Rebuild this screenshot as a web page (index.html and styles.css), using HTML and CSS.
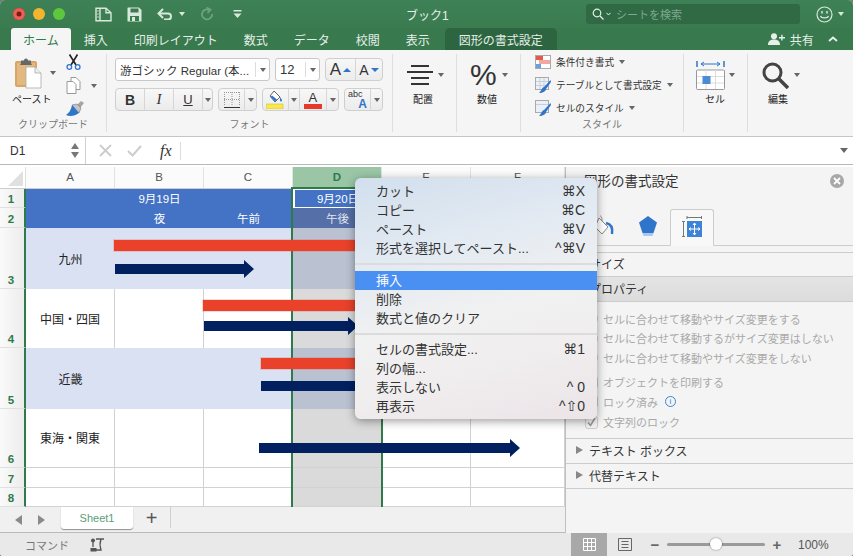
FILE: index.html
```html
<!DOCTYPE html>
<html lang="ja">
<head>
    <meta charset="UTF-8">
    <title>ブック1</title>
    <link rel="stylesheet" href="styles.css">
</head>
<body>
<div class="window">
    <header class="titlebar">
        <div class="lights"><span class="light red"></span><span class="light yellow"></span><span class="light green"></span></div>
        <div class="quick-tools">
            <svg class="qt-side" width="17" height="15" viewBox="0 0 17 15" fill="none" stroke="#d9e8dd" stroke-width="1.4"><path d="M1 1.2h10l5 4.5v8.1H1z"/><path d="M5 1.2v12.6M11 1.2v4.5h5"/><path d="M2.5 4h1M2.5 7h1M2.5 10h1"/></svg>
            <svg class="qt-save" width="15" height="15" viewBox="0 0 15 15"><path d="M1 0.5h11l2.5 2.5v11.500H0.500V1z" fill="#d9e8dd"/><rect x="3.500" y="1.500" width="8" height="4" fill="#3a7b50"/><rect x="3" y="9" width="9" height="5" fill="#3a7b50"/><rect x="5" y="10" width="3" height="4" fill="#d9e8dd"/></svg>
            <svg class="qt-undo" width="17" height="12" viewBox="0 0 17 12" fill="none" stroke="#d9e8dd" stroke-width="2"><path d="M2 5.500h9a3 3 0 0 1 0 6H7"/><path d="M6 1L1.500 5.500 6 10"/></svg>
            <span class="caret light-caret"></span>
            <svg class="qt-redo" width="13" height="14" viewBox="0 0 13 14" fill="none" stroke="#6fa283" stroke-width="1.800"><path d="M8 2.800A5 5 0 1 0 11 7"/><path d="M5.500 0.500L9.500 2.800 6.500 6"/></svg>
            <svg class="qt-more" width="9" height="9" viewBox="0 0 9 9"><path d="M0.500 0h8v1.500h-8z M0.500 3.500h8L4.500 8z" fill="#d9e8dd"/></svg>
        </div>
        <div class="doc-title">ブック1</div>
        <div class="search-box">
            <svg width="12" height="12" viewBox="0 0 12 12" fill="none" stroke="#e6efe9" stroke-width="1.200"><circle cx="5" cy="5" r="3.800"/><path d="M8 8l3.500 3.500"/></svg>
            <svg class="search-chev" width="5" height="4" viewBox="0 0 5 4" fill="none" stroke="#e6efe9"><path d="M0.500 0.800L2.500 3 4.500 0.800"/></svg>
            <span>シートを検索</span>
        </div>
        <svg class="smiley" width="17" height="17" viewBox="0 0 17 17" fill="none" stroke="#d9e8dd" stroke-width="1.200"><circle cx="8.500" cy="8.500" r="7.500"/><path d="M4.500 10c1 2.500 7 2.500 8 0"/><path d="M6 5v2.500M11 5v2.500" stroke-width="1.500"/></svg>
        <span class="caret light-caret"></span>
    </header>

    <nav class="tabs">
        <div class="tab active">ホーム</div>
        <div class="tab">挿入</div>
        <div class="tab">印刷レイアウト</div>
        <div class="tab">数式</div>
        <div class="tab">データ</div>
        <div class="tab">校閲</div>
        <div class="tab">表示</div>
        <div class="tab context">図形の書式設定</div>
        <div class="share">
            <svg width="17" height="12" viewBox="0 0 17 12" fill="#e6efe9"><circle cx="6" cy="3.200" r="3"/><path d="M0 12c0-4 2.500-5.500 6-5.500s6 1.500 6 5.500z"/><path d="M11 4h2.200V1.800h1.400V4H17v1.400h-2.400v2.200h-1.400V5.400H11z"/></svg>
            <span>共有</span>
            <svg class="collapse" width="10" height="6" viewBox="0 0 10 6" fill="none" stroke="#e6efe9" stroke-width="2"><path d="M1 5l4-3.500L9 5"/></svg>
        </div>
    </nav>

    <section class="ribbon">
        <div class="group clipboard">
            <div class="group-body">
                <div class="paste">
                    <div class="paste-top">
                        <svg width="28" height="32" viewBox="0 0 28 32"><rect x="1" y="4" width="22" height="26" rx="2" fill="#d7a566"/><rect x="3" y="6" width="18" height="22" fill="#e3b97f"/><path d="M7 6V3.500h3a2 2 0 0 1 4 0h3V6l1 2H6z" fill="#676767"/><path d="M12 10h9l6 6v15H12z" fill="#fff" stroke="#aaa" stroke-width="0.800"/><path d="M21 10v6h6" fill="#eee" stroke="#aaa" stroke-width="0.800"/></svg>
                        <span class="caret"></span>
                    </div>
                    <div class="tool-label">ペースト</div>
                </div>
                <div class="clip-small">
                    <svg width="15" height="16" viewBox="0 0 15 16" fill="none"><path d="M3.500 0.500L10 11M11.500 0.500L5 11" stroke="#222" stroke-width="1.600"/><circle cx="3.300" cy="13" r="2.300" stroke="#2f75c9" stroke-width="1.300"/><circle cx="11.700" cy="13" r="2.300" stroke="#2f75c9" stroke-width="1.300"/></svg>
                    <div class="copy-row">
                        <svg width="15" height="17" viewBox="0 0 15 17" fill="#fff" stroke="#999"><path d="M5 0.500h5l4 4v8H5z"/><path d="M1 4.500h6l3 3v9H1z"/></svg>
                        <span class="caret"></span>
                    </div>
                    <svg width="18" height="16" viewBox="0 0 18 16"><path d="M11 4l4-4 3 2-4 5z" fill="#a5a5a5"/><path d="M6 4l5-1 4 4-2 5z" fill="#c4c4c4" stroke="#777" stroke-width="0.600"/><path d="M6 4l7 8c-4 3-9 4-13 2 3-2 5-5 6-10z" fill="#2f75c9"/></svg>
                </div>
            </div>
            <div class="group-label">クリップボード</div>
        </div>

        <div class="group font">
            <div class="group-body font-rows">
                <div class="font-row">
                    <div class="box font-name"><span class="box-text">游ゴシック Regular (本...</span><span class="box-drop"><span class="caret"></span></span></div>
                    <div class="box font-size"><span class="box-text">12</span><span class="box-drop"><span class="caret"></span></span></div>
                    <div class="btn-set size-set">
                        <div class="btn"><span class="big-a">A</span><span class="tri-up"></span></div>
                        <div class="btn"><span class="small-a">A</span><span class="tri-down"></span></div>
                    </div>
                </div>
                <div class="font-row">
                    <div class="btn-set biu">
                        <div class="btn"><b>B</b></div>
                        <div class="btn"><i class="italic">I</i></div>
                        <div class="btn"><span class="under">U</span></div>
                        <div class="btn drop"><span class="caret"></span></div>
                    </div>
                    <div class="btn-set borders">
                        <div class="btn">
                            <svg width="18" height="18" viewBox="0 0 18 18" fill="none"><path d="M1 1.500h16M1 8.500h16M1.500 1v13M9 1v13M16.500 1v13" stroke="#999" stroke-dasharray="1 1"/><path d="M1 16.500h16" stroke="#333"/></svg>
                        </div>
                        <div class="btn drop"><span class="caret"></span></div>
                    </div>
                    <div class="btn-set colors">
                        <div class="btn fill-btn">
                            <svg width="18" height="19" viewBox="0 0 18 19"><path d="M8 1l6 6-5 5-5-6z" fill="#fff" stroke="#666"/><path d="M4.500 7l4.500 4.500 2-2-5-4z" fill="#2f75c9"/><path d="M14 7c1 1.500 2 2.500 2 3.500a1 1 0 0 1-2 0z" fill="#2f75c9"/><rect x="0" y="14" width="17" height="5" fill="#f8e84a" stroke="#c4b93a" stroke-width="0.500"/></svg>
                        </div>
                        <div class="btn drop"><span class="caret"></span></div>
                        <div class="btn color-a"><span class="a-letter">A</span><span class="a-swatch"></span></div>
                        <div class="btn drop"><span class="caret"></span></div>
                    </div>
                    <div class="btn-set phonetic">
                        <div class="btn abc"><span class="abc-text">abc</span><span class="abc-a">A</span></div>
                        <div class="btn drop"><span class="caret"></span></div>
                    </div>
                </div>
            </div>
            <div class="group-label">フォント</div>
        </div>

        <div class="group align">
            <div class="big-tool">
                <div class="big-top">
                    <svg width="26" height="22" viewBox="0 0 26 22" fill="#333"><rect x="4" y="1" width="18" height="2"/><rect x="0" y="7" width="26" height="2"/><rect x="4" y="13" width="18" height="2"/><rect x="4" y="19" width="18" height="2"/></svg>
                    <span class="caret"></span>
                </div>
                <div class="tool-label">配置</div>
            </div>
        </div>

        <div class="group number">
            <div class="big-tool">
                <div class="big-top"><span class="percent">%</span><span class="caret"></span></div>
                <div class="tool-label">数値</div>
            </div>
        </div>

        <div class="group styles">
            <div class="group-body style-list">
                <div class="style-row">
                    <svg width="16" height="14" viewBox="0 0 16 14"><rect x="0.500" y="0.500" width="15" height="13" fill="#fff" stroke="#aaa"/><rect x="1" y="1" width="7" height="4" fill="#e65a4a"/><rect x="4" y="5" width="11" height="4" fill="#f2a7a0"/><rect x="1" y="9" width="5" height="4" fill="#6aa0dd"/></svg>
                    <span>条件付き書式</span><span class="caret"></span>
                </div>
                <div class="style-row">
                    <svg width="16" height="17" viewBox="0 0 16 17"><rect x="0.500" y="0.500" width="13" height="12" fill="#eef2f7" stroke="#aaa"/><path d="M1 4.500h12M1 8.500h12M5 1v11M9 1v11" stroke="#c6cfdb"/><path d="M15.500 3L10 9l-1 1c-2 .5-2 3-5 6 4 0 7-2 7-4l5-7z" fill="#2f75c9"/></svg>
                    <span>テーブルとして書式設定</span><span class="caret"></span>
                </div>
                <div class="style-row">
                    <svg width="16" height="17" viewBox="0 0 16 17"><rect x="0.500" y="0.500" width="13" height="12" fill="#e9f0f8" stroke="#aaa"/><path d="M1 4.500h12" stroke="#c6cfdb"/><path d="M15.500 3L10 9l-1 1c-2 .5-2 3-5 6 4 0 7-2 7-4l5-7z" fill="#2f75c9"/></svg>
                    <span>セルのスタイル</span><span class="caret"></span>
                </div>
            </div>
            <div class="group-label">スタイル</div>
        </div>

        <div class="group cells">
            <div class="big-tool">
                <div class="big-top">
                    <svg width="29" height="29" viewBox="0 0 29 29" fill="none"><path d="M1 0v6M28 0v6" stroke="#2f75c9" stroke-width="1.500"/><path d="M5 3h19M8 1L5 3l3 2M21 1l3 2-3 2" stroke="#2f75c9"/><rect x="0.500" y="9" width="28" height="19.500" rx="1" fill="#fff" stroke="#999"/><path d="M1 15.500h27M1 22h27M10 9v19M19.500 9v19" stroke="#ddd"/><rect x="6.500" y="15" width="8" height="8" fill="#4a8bd4"/></svg>
                    <span class="caret"></span>
                </div>
                <div class="tool-label">セル</div>
            </div>
        </div>

        <div class="group edit">
            <div class="big-tool">
                <div class="big-top">
                    <svg width="27" height="27" viewBox="0 0 27 27" fill="none" stroke="#444"><circle cx="10.500" cy="10.500" r="8.500" stroke-width="3"/><path d="M17 17l9 9" stroke-width="3.500"/></svg>
                    <span class="caret"></span>
                </div>
                <div class="tool-label">編集</div>
            </div>
        </div>
    </section>

    <section class="formula-bar">
        <div class="name-box">
            <span>D1</span>
            <span class="spinner"><span class="tri-up gray"></span><span class="tri-down gray"></span></span>
        </div>
        <div class="formula-tools">
            <svg width="13" height="13" viewBox="0 0 13 13" stroke="#ccc" stroke-width="1.800"><path d="M1 1l11 11M12 1L1 12"/></svg>
            <svg width="15" height="12" viewBox="0 0 15 12" fill="none" stroke="#ccc" stroke-width="2"><path d="M1 6l4.500 4.500L14 1"/></svg>
            <span class="fx">fx</span>
        </div>
        <div class="formula-input"></div>
        <span class="caret formula-caret"></span>
    </section>

    <div class="main">
        <section class="sheet">
            <div class="grid-row col-heads">
                <div class="corner"><span class="corner-tri"></span></div>
                <div class="col-head">A</div>
                <div class="col-head">B</div>
                <div class="col-head">C</div>
                <div class="col-head selected">D</div>
                <div class="col-head">E</div>
                <div class="col-head">F</div>
            </div>
            <div class="grid-row row-1">
                <div class="row-head">1</div>
                <div class="cell blue"></div><div class="cell blue">9月19日</div><div class="cell blue"></div>
                <div class="cell blue active-cell">9月20日</div><div class="cell blue"></div><div class="cell blue"></div>
            </div>
            <div class="grid-row row-2">
                <div class="row-head">2</div>
                <div class="cell blue"></div><div class="cell blue">夜</div><div class="cell blue">午前</div>
                <div class="cell blue-sel">午後</div><div class="cell blue"></div><div class="cell blue"></div>
            </div>
            <div class="grid-row row-3">
                <div class="row-head">3</div>
                <div class="cell band">九州</div><div class="cell band"></div><div class="cell band"></div>
                <div class="cell band-sel"></div><div class="cell band"></div><div class="cell band"></div>
            </div>
            <div class="grid-row row-4">
                <div class="row-head">4</div>
                <div class="cell plain">中国・四国</div><div class="cell plain"></div><div class="cell plain"></div>
                <div class="cell sel"></div><div class="cell plain"></div><div class="cell plain"></div>
            </div>
            <div class="grid-row row-3">
                <div class="row-head">5</div>
                <div class="cell band">近畿</div><div class="cell band"></div><div class="cell band"></div>
                <div class="cell band-sel"></div><div class="cell band"></div><div class="cell band"></div>
            </div>
            <div class="grid-row row-4">
                <div class="row-head">6</div>
                <div class="cell plain lined">東海・関東</div><div class="cell plain lined"></div><div class="cell plain lined"></div>
                <div class="cell sel lined"></div><div class="cell plain lined"></div><div class="cell plain lined"></div>
            </div>
            <div class="grid-row row-2">
                <div class="row-head">7</div>
                <div class="cell plain lined"></div><div class="cell plain lined"></div><div class="cell plain lined"></div>
                <div class="cell sel lined"></div><div class="cell plain lined"></div><div class="cell plain lined"></div>
            </div>
            <div class="grid-row row-1">
                <div class="row-head">8</div>
                <div class="cell plain lined"></div><div class="cell plain lined"></div><div class="cell plain lined"></div>
                <div class="cell sel lined"></div><div class="cell plain lined"></div><div class="cell plain lined"></div>
            </div>

            <div class="col-outline"></div>
            <div class="shape bar bar-1"></div>
            <div class="shape arrow arrow-1"></div>
            <div class="shape bar bar-2"></div>
            <div class="shape arrow arrow-2"></div>
            <div class="shape bar bar-3"></div>
            <div class="shape arrow arrow-3"></div>
            <div class="shape arrow arrow-4"></div>

            <div class="sheet-tabs">
                <span class="nav-tri left"></span>
                <span class="nav-tri right"></span>
                <div class="sheet-tab">Sheet1</div>
                <div class="add-sheet">+</div>
            </div>
        </section>

        <aside class="pane">
            <div class="pane-title">
                <span>図形の書式設定</span>
                <span class="pane-close">
                    <svg width="8" height="8" viewBox="0 0 8 8" stroke="#fff" stroke-width="1.800"><path d="M1 1l6 6M7 1L1 7"/></svg>
                </span>
            </div>
            <div class="pane-tabs">
                <div class="pane-tab">
                    <svg width="24" height="24" viewBox="0 0 24 24" fill="none"><path d="M7 3l9 9-6 7-7-7z" fill="#fff" stroke="#888"/><path d="M8 1c1 0 2 1 2 5" stroke="#888"/><path d="M14 8c5 1 7 5 6 11" stroke="#2f75c9" stroke-width="2.500"/></svg>
                </div>
                <div class="pane-tab">
                    <svg width="18" height="21" viewBox="0 0 18 21"><path d="M9 0l9 6.500-3.500 10.500h-11L0 6.500z" fill="#2f75c9"/><path d="M3.500 17h11l-1 3h-9z" fill="#a9c8ec"/></svg>
                </div>
                <div class="pane-tab current">
                    <svg width="20" height="21" viewBox="0 0 20 21" fill="none"><path d="M5 1.500h15M5 0v3M19.500 0v3M1.500 5v16M0 5.500h3M0 20.500h3" stroke="#777"/><rect x="5" y="5" width="15" height="16" fill="#3d83d6"/><path d="M12.500 7v12M7 13h11M11 9l1.500-2L14 9M11 17l1.500 2 1.500-2M9 11.500L7 13l2 1.500M16 11.500l2 1.500-2 1.500" stroke="#fff"/></svg>
                </div>
            </div>
            <div class="section">サイズ</div>
            <div class="section open">プロパティ</div>
            <div class="props">
                <div class="prop"><span class="radio"></span>セルに合わせて移動やサイズ変更をする</div>
                <div class="prop"><span class="radio"></span>セルに合わせて移動するがサイズ変更はしない</div>
                <div class="prop"><span class="radio"></span>セルに合わせて移動やサイズ変更をしない</div>
                <div class="prop gap-top"><span class="check"></span>オブジェクトを印刷する</div>
                <div class="prop"><span class="check"></span>ロック済み<span class="info">i</span></div>
                <div class="prop"><span class="check">
                    <svg width="11" height="11" viewBox="0 0 11 11" fill="none" stroke="#999" stroke-width="1.500"><path d="M2 5.500l2.500 3L9 1"/></svg>
                </span>文字列のロック</div>
            </div>
            <div class="section closed"><span class="sec-tri"></span>テキスト ボックス</div>
            <div class="section closed"><span class="sec-tri"></span>代替テキスト</div>
        </aside>
    </div>

    <footer class="statusbar">
        <span class="status-text">コマンド</span>
        <svg class="macro" width="15" height="14" viewBox="0 0 15 14" fill="none" stroke="#555" stroke-width="1.300"><path d="M6 1h8M11 1c-1 3-1 8 0 11H4"/><circle cx="3" cy="2.500" r="2" fill="#555" stroke="none"/><path d="M3 4v5"/><rect x="0.500" y="10" width="6" height="3.500" fill="#555" stroke="none"/></svg>
        <div class="status-right">
            <div class="view-btn on">
                <svg width="13" height="13" viewBox="0 0 13 13" fill="none" stroke="#fff"><path d="M0.500 0.500h12v12h-12zM4.500 0.500v12M8.500 0.500v12M0.500 4.500h12M0.500 8.500h12"/></svg>
            </div>
            <div class="view-btn">
                <svg width="14" height="13" viewBox="0 0 14 13" fill="none" stroke="#666"><path d="M0.500 0.500h13v12h-13zM3.500 3.500h7M3.500 6.500h7M3.500 9.500h7"/></svg>
            </div>
            <div class="zoom-sign">−</div>
            <div class="slider"><span class="knob"></span></div>
            <div class="zoom-sign">+</div>
            <div class="zoom-val">100%</div>
        </div>
    </footer>

    <div class="context-menu">
        <div class="mi"><span>カット</span><span class="key">⌘X</span></div>
        <div class="mi"><span>コピー</span><span class="key">⌘C</span></div>
        <div class="mi"><span>ペースト</span><span class="key">⌘V</span></div>
        <div class="mi"><span>形式を選択してペースト...</span><span class="key">^⌘V</span></div>
        <div class="msep"></div>
        <div class="mi hot"><span>挿入</span></div>
        <div class="mi"><span>削除</span></div>
        <div class="mi"><span>数式と値のクリア</span></div>
        <div class="msep"></div>
        <div class="mi"><span>セルの書式設定...</span><span class="key">⌘1</span></div>
        <div class="mi"><span>列の幅...</span></div>
        <div class="mi"><span>表示しない</span><span class="key">^ 0</span></div>
        <div class="mi"><span>再表示</span><span class="key">^⇧0</span></div>
    </div>
</div>
</body>
</html>
```

FILE: styles.css
```css
:root {
    --green: #2f7a4b;
    --line: #d2d2d2;
    --panel: #f5f5f5;
    --text: #333;
}

* {
    box-sizing: border-box;
}

body {
    margin: 0;
    background-color: #777;
    font-family: "Liberation Sans", "Noto Sans CJK JP", sans-serif;
    color: var(--text);
}

.window {
    position: relative;
    width: 853px;
    height: 556px;
    display: flex;
    flex-direction: column;
    overflow: hidden;
    border-radius: 5px 5px 3px 3px;
    background-color: var(--panel);
}

/* title bar */
.titlebar {
    height: 28px;
    display: flex;
    align-items: center;
    padding-left: 13px;
    background: linear-gradient(#3f8156, #3a7b50);
    color: #e6efe9;
}

.lights {
    display: flex;
    gap: 8px;
}

.light {
    width: 12px;
    height: 12px;
    border-radius: 50%;
}

.light.red { background-color: #ec5f56; box-shadow: inset 0 0 0 3.500px #ec5f56, inset 0 0 0 6px #7c1a14; }
.light.yellow { background-color: #f3b52f; }
.light.green { background-color: #5dc83d; }

.quick-tools {
    display: flex;
    align-items: center;
    margin-left: 30px;
    width: 160px;
}

.qt-save { margin-left: 15px; }
.qt-undo { margin-left: 15px; }
.light-caret { margin-left: 7px; border-top-color: #d9e8dd !important; }
.qt-redo { margin-left: 16px; }
.qt-more { margin-left: 19px; }

.doc-title {
    margin-left: 2px;
    width: 161px;
    padding-left: 149px;
    font-size: 12px;
    white-space: nowrap;
}

.search-box {
    margin-left: 168px;
    width: 214px;
    height: 20px;
    display: flex;
    align-items: center;
    padding-left: 6px;
    border-radius: 3px;
    background-color: #2f6a44;
    font-size: 11px;
    color: #7fa88f;
}

.search-chev { margin: 0 5px 0 2px; }

.smiley { margin-left: 16px; }

.titlebar .light-caret { margin-left: 5px; }

/* tabs */
.tabs {
    height: 22px;
    display: flex;
    align-items: stretch;
    padding-left: 11px;
    background-color: #38794e;
    font-size: 12px;
    color: #e6efe9;
}

.tab {
    display: flex;
    align-items: center;
    padding: 0 13px;
    white-space: nowrap;
}

.tab.active {
    padding: 0 12px;
    border-radius: 3px 3px 0 0;
    background-color: var(--panel);
    color: var(--green);
}

.tab.context {
    margin-left: 2px;
    padding: 0 14px;
    border-radius: 5px 5px 0 0;
    background-color: #2d6541;
}

.share {
    display: flex;
    align-items: center;
    margin-left: 211px;
    gap: 5px;
}

.collapse { margin-left: 9px; }

/* ribbon */
.ribbon {
    height: 87px;
    display: flex;
    background-color: var(--panel);
    border-bottom: 1px solid #c6c6c6;
}

.group {
    position: relative;
    display: flex;
    flex-direction: column;
    margin: 4px 0;
    border-right: 1px solid #dedede;
}

.group-body {
    flex: 1;
    display: flex;
}

.group-label {
    height: 14px;
    line-height: 14px;
    text-align: center;
    font-size: 10px;
    color: #777;
}

.clipboard { width: 107px; }
.font { width: 286px; }
.align { width: 64px; }
.number { width: 64px; }
.styles { width: 163px; }
.cells { width: 64px; }
.edit { flex: 1; border-right: none; }

.caret {
    display: inline-block;
    width: 0;
    height: 0;
    border-left: 3px solid transparent;
    border-right: 3px solid transparent;
    border-top: 4px solid #666;
}

.tool-label {
    font-size: 10px;
    line-height: 14px;
    text-align: center;
    color: #222;
    white-space: nowrap;
}

.paste {
    width: 60px;
    padding: 3px 0 0 12px;
}

.paste .tool-label { width: 38px; margin-top: 4px; }

.paste-top {
    display: flex;
    align-items: center;
}

.paste-top svg { margin-left: 2px; flex: none; }
.paste-top .caret { margin-left: 8px; }

.clip-small {
    display: flex;
    flex-direction: column;
    padding-left: 6px;
    gap: 7px;
}

.copy-row {
    display: flex;
    align-items: center;
    gap: 10px;
}

.font-rows {
    flex-direction: column;
    gap: 7px;
    padding: 4px 0 0 8px;
}

.font-row {
    display: flex;
    gap: 5px;
    height: 23px;
}

.box {
    display: flex;
    align-items: stretch;
    background-color: #fff;
    border: 1px solid #c8c8c8;
    border-radius: 3px;
    font-size: 11.500px;
}

.box-text {
    flex: 1;
    display: flex;
    align-items: center;
    padding-left: 4px;
    white-space: nowrap;
    overflow: hidden;
}

.box-drop {
    width: 14px;
    margin: 3px 0;
    display: flex;
    align-items: center;
    justify-content: center;
    border-left: 1px solid #ddd;
}

.font-name { width: 155px; }
.font-size { width: 45px; font-size: 13px; }
.font-size .box-drop { width: 14px; }

.btn-set {
    display: flex;
    border: 1px solid #cfcfcf;
    border-radius: 4px;
    background: linear-gradient(#f7f7f7, #ececec);
}

.btn {
    display: flex;
    align-items: center;
    justify-content: center;
    border-right: 1px solid #d6d6d6;
    font-size: 14px;
}

.btn:last-child { border-right: none; }
.btn.drop { width: 11px; }

.size-set { width: 58px; }
.size-set .btn:first-child { width: 30px; }
.size-set .btn:last-child { flex: 1; }

.big-a { font-size: 17px; }
.small-a { font-size: 14px; }

.tri-up, .tri-down {
    display: inline-block;
    width: 0;
    height: 0;
    margin-left: 2px;
    border-left: 4px solid transparent;
    border-right: 4px solid transparent;
}

.tri-up { border-bottom: 4px solid #2f75c9; }
.tri-down { border-top: 4px solid #2f75c9; }
.tri-up.gray { border-bottom-color: #777; border-left-width: 4px; border-bottom-width: 6px; margin: 0; }
.tri-down.gray { border-top-color: #777; border-top-width: 6px; margin: 0; }

.biu { width: 98px; }
.biu .btn { width: 29px; }
.biu .btn.drop { flex: 1; }
.italic { font-family: "Liberation Serif", serif; font-size: 15px; }
.under { text-decoration: underline; font-size: 13px; }

.borders { width: 39px; }
.borders .btn:first-child { flex: 1; }

.colors { width: 77px; }
.fill-btn { width: 26px; }
.color-a { width: 28px; flex-direction: column; }
.a-letter { font-size: 13px; line-height: 13px; }
.a-swatch { width: 18px; height: 5px; background-color: #e6392b; }

.phonetic { width: 39px; }
.abc {
    flex: 1;
    flex-direction: column;
}
.abc-text { height: 9px; font-size: 9px; line-height: 9px; align-self: flex-start; padding-left: 3px; }
.abc-a { height: 11px; font-size: 12px; font-weight: bold; color: #2f75c9; align-self: flex-end; line-height: 11px; padding-right: 3px; }

.big-tool {
    padding-top: 4px;
    display: flex;
    flex-direction: column;
    align-items: flex-start;
}

.big-top {
    height: 34px;
    display: flex;
    align-items: center;
    gap: 5px;
    margin-bottom: 1px;
}

.align .big-tool { padding-left: 14px; }
.align .tool-label { margin-left: 6px; }
.number .big-tool { padding-left: 13px; }
.number .tool-label { margin-left: 7px; }
.cells .big-tool { padding-left: 12px; }
.cells .big-top { gap: 4px; }
.cells .tool-label { margin-left: 9px; }
.edit .big-tool { padding-left: 14px; }
.edit .tool-label { margin-left: 6px; }

.percent {
    font-size: 30px;
    line-height: 34px;
    color: #333;
}

.style-list {
    flex-direction: column;
    gap: 7px;
    padding: 0 0 0 14px;
}

.style-row {
    height: 16px;
    display: flex;
    align-items: center;
    gap: 5px;
    font-size: 9.700px;
    white-space: nowrap;
}

/* formula bar */
.formula-bar {
    height: 28px;
    flex: none;
    display: flex;
    align-items: center;
    background-color: #fff;
    border-bottom: 1px solid #b8b8b8;
    font-size: 12px;
}

.name-box {
    width: 86px;
    height: 100%;
    display: flex;
    align-items: center;
    justify-content: space-between;
    padding: 0 6px 0 10px;
    border-right: 1px solid #d0d0d0;
}

.spinner {
    display: flex;
    flex-direction: column;
    gap: 3px;
}

.formula-tools {
    width: 95px;
    display: flex;
    align-items: center;
    gap: 15px;
    padding-left: 13px;
    border-right: 1px solid #ddd;
}

.fx {
    font-family: "Liberation Serif", serif;
    font-style: italic;
    font-size: 16px;
    margin-left: 3px;
}

.formula-input { flex: 1; }
.formula-caret { margin-right: 5px; border-left-width: 4px; border-right-width: 4px; border-top-width: 5px; }

/* sheet */
.main {
    flex: 1;
    display: flex;
    min-height: 0;
    padding-top: 2px;
    background-color: #fff;
}

.sheet {
    position: relative;
    width: 565px;
    flex: none;
    display: flex;
    flex-direction: column;
    background-color: #fff;
}

.grid-row {
    display: grid;
    grid-template-columns: 26px 89px 89px 89px 89px 89px 94px;
}

.col-heads { height: 22px; border-bottom: 1px solid #ccc; }
.row-1 { height: 19px; }
.row-2 { height: 20px; }
.row-3 { height: 61px; }
.row-4 { height: 59px; }

.corner {
    padding: 4px 2px 1px 8px;
    border-right: 1px solid #ddd;
    background-color: #fff;
}

.corner-tri {
    display: block;
    width: 15px;
    height: 15px;
    background-color: #e0e0e0;
    clip-path: polygon(100% 0, 100% 100%, 0 100%);
}

.col-head {
    display: flex;
    align-items: center;
    justify-content: center;
    padding-bottom: 1px;
    font-size: 11.500px;
    color: #555;
    border-right: 1px solid #e2e2e2;
    background-color: #fbfbfb;
}

.col-head.selected {
    background-color: #9ac6a6;
    color: #2f7a4b;
    font-weight: bold;
}

.row-head {
    display: flex;
    align-items: flex-end;
    justify-content: center;
    padding-bottom: 2px;
    padding-right: 2px;
    font-size: 11.500px;
    font-weight: bold;
    color: var(--green);
    background: linear-gradient(90deg, #fafafa, #ececec);
    border-right: 2px solid var(--green);
    border-bottom: 1px solid #e0e0e0;
}

.cell {
    display: flex;
    align-items: center;
    justify-content: center;
    padding-bottom: 1px;
    font-size: 12px;
    color: #222;
    white-space: nowrap;
}

.row-2 .cell { padding-bottom: 0; }

.cell.blue { background-color: #4472c4; color: #fff; font-size: 11.500px; }
.cell.blue-sel { background-color: #5570a8; color: #e3e6ee; font-size: 11.500px; }
.cell.active-cell { border: 1px solid #fff; margin-left: 1px; }
.cell.band { background-color: #d9e1f2; }
.cell.band-sel { background-color: #bac2d1; }
.cell.plain { background-color: #fff; border-right: 1px solid var(--line); }
.cell.sel { background-color: #dadada; border-right: 1px solid #c8c8c8; }
.cell.lined { border-bottom: 1px solid var(--line); }

.col-outline {
    position: absolute;
    left: 291px;
    top: 20px;
    width: 92px;
    height: 320px;
    border: 2px solid var(--green);
    border-bottom: none;
}

.shape { position: absolute; }

.bar {
    height: 11px;
    background-color: #e9412a;
    box-shadow: 0 0 0 1px rgba(233, 65, 42, 0.2);
}

.bar-1 { left: 114px; top: 73px; width: 245px; }
.bar-2 { left: 203px; top: 133px; width: 156px; }
.bar-3 { left: 261px; top: 191px; width: 98px; }

.arrow {
    height: 18px;
    background-color: #002060;
    clip-path: polygon(0 4px, calc(100% - 10px) 4px, calc(100% - 10px) 0, 100% 50%, calc(100% - 10px) 100%, calc(100% - 10px) 14px, 0 14px);
}

.arrow-1 { left: 115px; top: 93px; width: 139px; }
.arrow-2 { left: 204px; top: 150px; width: 154px; }
.arrow-3 { left: 261px; top: 210px; width: 130px; }
.arrow-4 { left: 259px; top: 272px; width: 261px; }

.sheet-tabs {
    flex: 1;
    display: flex;
    align-items: flex-start;
    background-color: #f0f0f0;
    border-bottom: 1px solid #bbb;
    position: relative;
    z-index: 1;
    min-height: 26px;
}

.nav-tri {
    width: 0;
    height: 0;
    margin-top: 8px;
    border-top: 5px solid transparent;
    border-bottom: 5px solid transparent;
}

.nav-tri.left { margin-left: 15px; border-right: 7px solid #8a8a8a; }
.nav-tri.right { margin-left: 16px; border-left: 7px solid #8a8a8a; }

.sheet-tab {
    width: 72px;
    height: 22px;
    margin-left: 16px;
    display: flex;
    align-items: center;
    justify-content: center;
    background-color: #fff;
    border-radius: 0 0 3px 3px;
    box-shadow: 0 1px 1px rgba(0, 0, 0, 0.4);
    font-size: 11px;
    color: #5c9e79;
}

.add-sheet {
    width: 38px;
    height: 21px;
    text-align: center;
    font-size: 20px;
    line-height: 23px;
    color: #555;
    border-right: 1px solid #d0d0d0;
}

/* side pane */
.pane {
    flex: 1;
    display: flex;
    flex-direction: column;
    background-color: #f4f4f4;
    border-left: 1px solid #c0c0c0;
}

.pane-title {
    height: 42px;
    display: flex;
    justify-content: space-between;
    align-items: flex-start;
    padding: 3px 9px 0 18px;
    font-size: 13.500px;
    color: #333;
}

.pane-close {
    width: 14px;
    height: 14px;
    margin-top: 4px;
    display: flex;
    align-items: center;
    justify-content: center;
    border-radius: 50%;
    background-color: #a8a8a8;
}

.pane-tabs {
    height: 37px;
    flex: none;
    display: flex;
    padding-left: 16px;
    border-bottom: 1px solid #ccc;
}

.pane-tab {
    width: 44px;
    height: 37px;
    display: flex;
    align-items: center;
    justify-content: center;
    padding-bottom: 2px;
}

.pane-tab.current {
    background-color: #f8f8f8;
    border: 1px solid #ccc;
    border-bottom-color: #f8f8f8;
    border-radius: 3px 3px 0 0;
}

.section {
    height: 25px;
    flex: none;
    display: flex;
    align-items: center;
    padding-left: 23px;
    padding-bottom: 2px;
    border-bottom: 1px solid #ccc;
    font-size: 12px;
    color: #333;
}

.pane-tabs + .section {
    margin-top: 6px;
    border-top: 1px solid #ccc;
}

.section.open { background: linear-gradient(#e4e4e4, #dcdcdc); }

.section.closed { padding-left: 10px; }

.sec-tri {
    width: 0;
    height: 0;
    margin-right: 6px;
    border-top: 4px solid transparent;
    border-bottom: 4px solid transparent;
    border-left: 7px solid #888;
}

.props {
    height: 137px;
    flex: none;
    padding-top: 7px;
    border-bottom: 1px solid #ccc;
}

.prop {
    height: 19.500px;
    display: flex;
    align-items: center;
    padding-left: 19px;
    font-size: 11px;
    color: #a9a9a9;
    white-space: nowrap;
}

.gap-top { margin-top: 5px; }
.prop:last-child { margin-top: 1px; }

.radio, .check {
    flex: none;
    width: 13px;
    height: 13px;
    margin-right: 5px;
    display: flex;
    align-items: center;
    justify-content: center;
    background-color: #f4f4f4;
    border: 1px solid #ccc;
}

.radio { border-radius: 50%; }
.check { border-radius: 3px; }

.info {
    width: 11px;
    height: 11px;
    margin-left: 7px;
    display: flex;
    align-items: center;
    justify-content: center;
    border: 1px solid #3d83d6;
    border-radius: 50%;
    font-size: 8px;
    color: #3d83d6;
}

/* status bar */
.statusbar {
    height: 23px;
    flex: none;
    display: flex;
    align-items: center;
    padding-left: 25px;
    background-color: #e9e9e9;
    font-size: 11px;
    color: #777;
}

.macro { margin-left: 21px; }

.status-right {
    margin-left: auto;
    height: 100%;
    display: flex;
    align-items: center;
}

.view-btn {
    width: 36px;
    height: 100%;
    display: flex;
    align-items: center;
    justify-content: center;
}

.view-btn.on { background-color: #a8a8a8; }

.zoom-sign {
    width: 12px;
    margin-left: 6px;
    text-align: center;
    font-size: 15px;
    font-weight: bold;
    color: #666;
}

.slider {
    position: relative;
    width: 98px;
    height: 3px;
    margin-left: 6px;
    border-radius: 2px;
    background-color: #9a9a9a;
}

.knob {
    position: absolute;
    left: 43px;
    top: -5px;
    width: 12px;
    height: 12px;
    border-radius: 50%;
    background-color: #fff;
    box-shadow: 0 0 2px rgba(0, 0, 0, 0.5);
}

.zoom-val {
    width: 70px;
    padding-left: 15px;
    font-size: 12px;
    color: #555;
}

/* context menu */
.context-menu {
    position: absolute;
    left: 355px;
    top: 178px;
    width: 242px;
    height: 241px;
    padding: 4px 0 3px;
    border-radius: 6px;
    background: linear-gradient(165deg, #d1dfed 0%, #e3eaf2 30%, #f1f1f1 55%, #f0edee 75%, #ebe4e8 100%);
    box-shadow: 0 2px 10px rgba(0, 0, 0, 0.4);
    font-size: 13px;
    color: #333;
    z-index: 2;
}

.mi {
    height: 19px;
    display: flex;
    align-items: center;
    justify-content: space-between;
    padding: 0 12px 2px 21px;
    white-space: nowrap;
}

.mi.hot {
    background-color: #4a90f2;
    color: #fff;
}

.key {
    font-family: "Liberation Sans", "DejaVu Sans", sans-serif;
    font-size: 14px;
}

.msep {
    height: 12.500px;
    padding-top: 5px;
}

.msep::before {
    content: "";
    display: block;
    height: 2px;
    background-color: #dcdcdc;
}
```
